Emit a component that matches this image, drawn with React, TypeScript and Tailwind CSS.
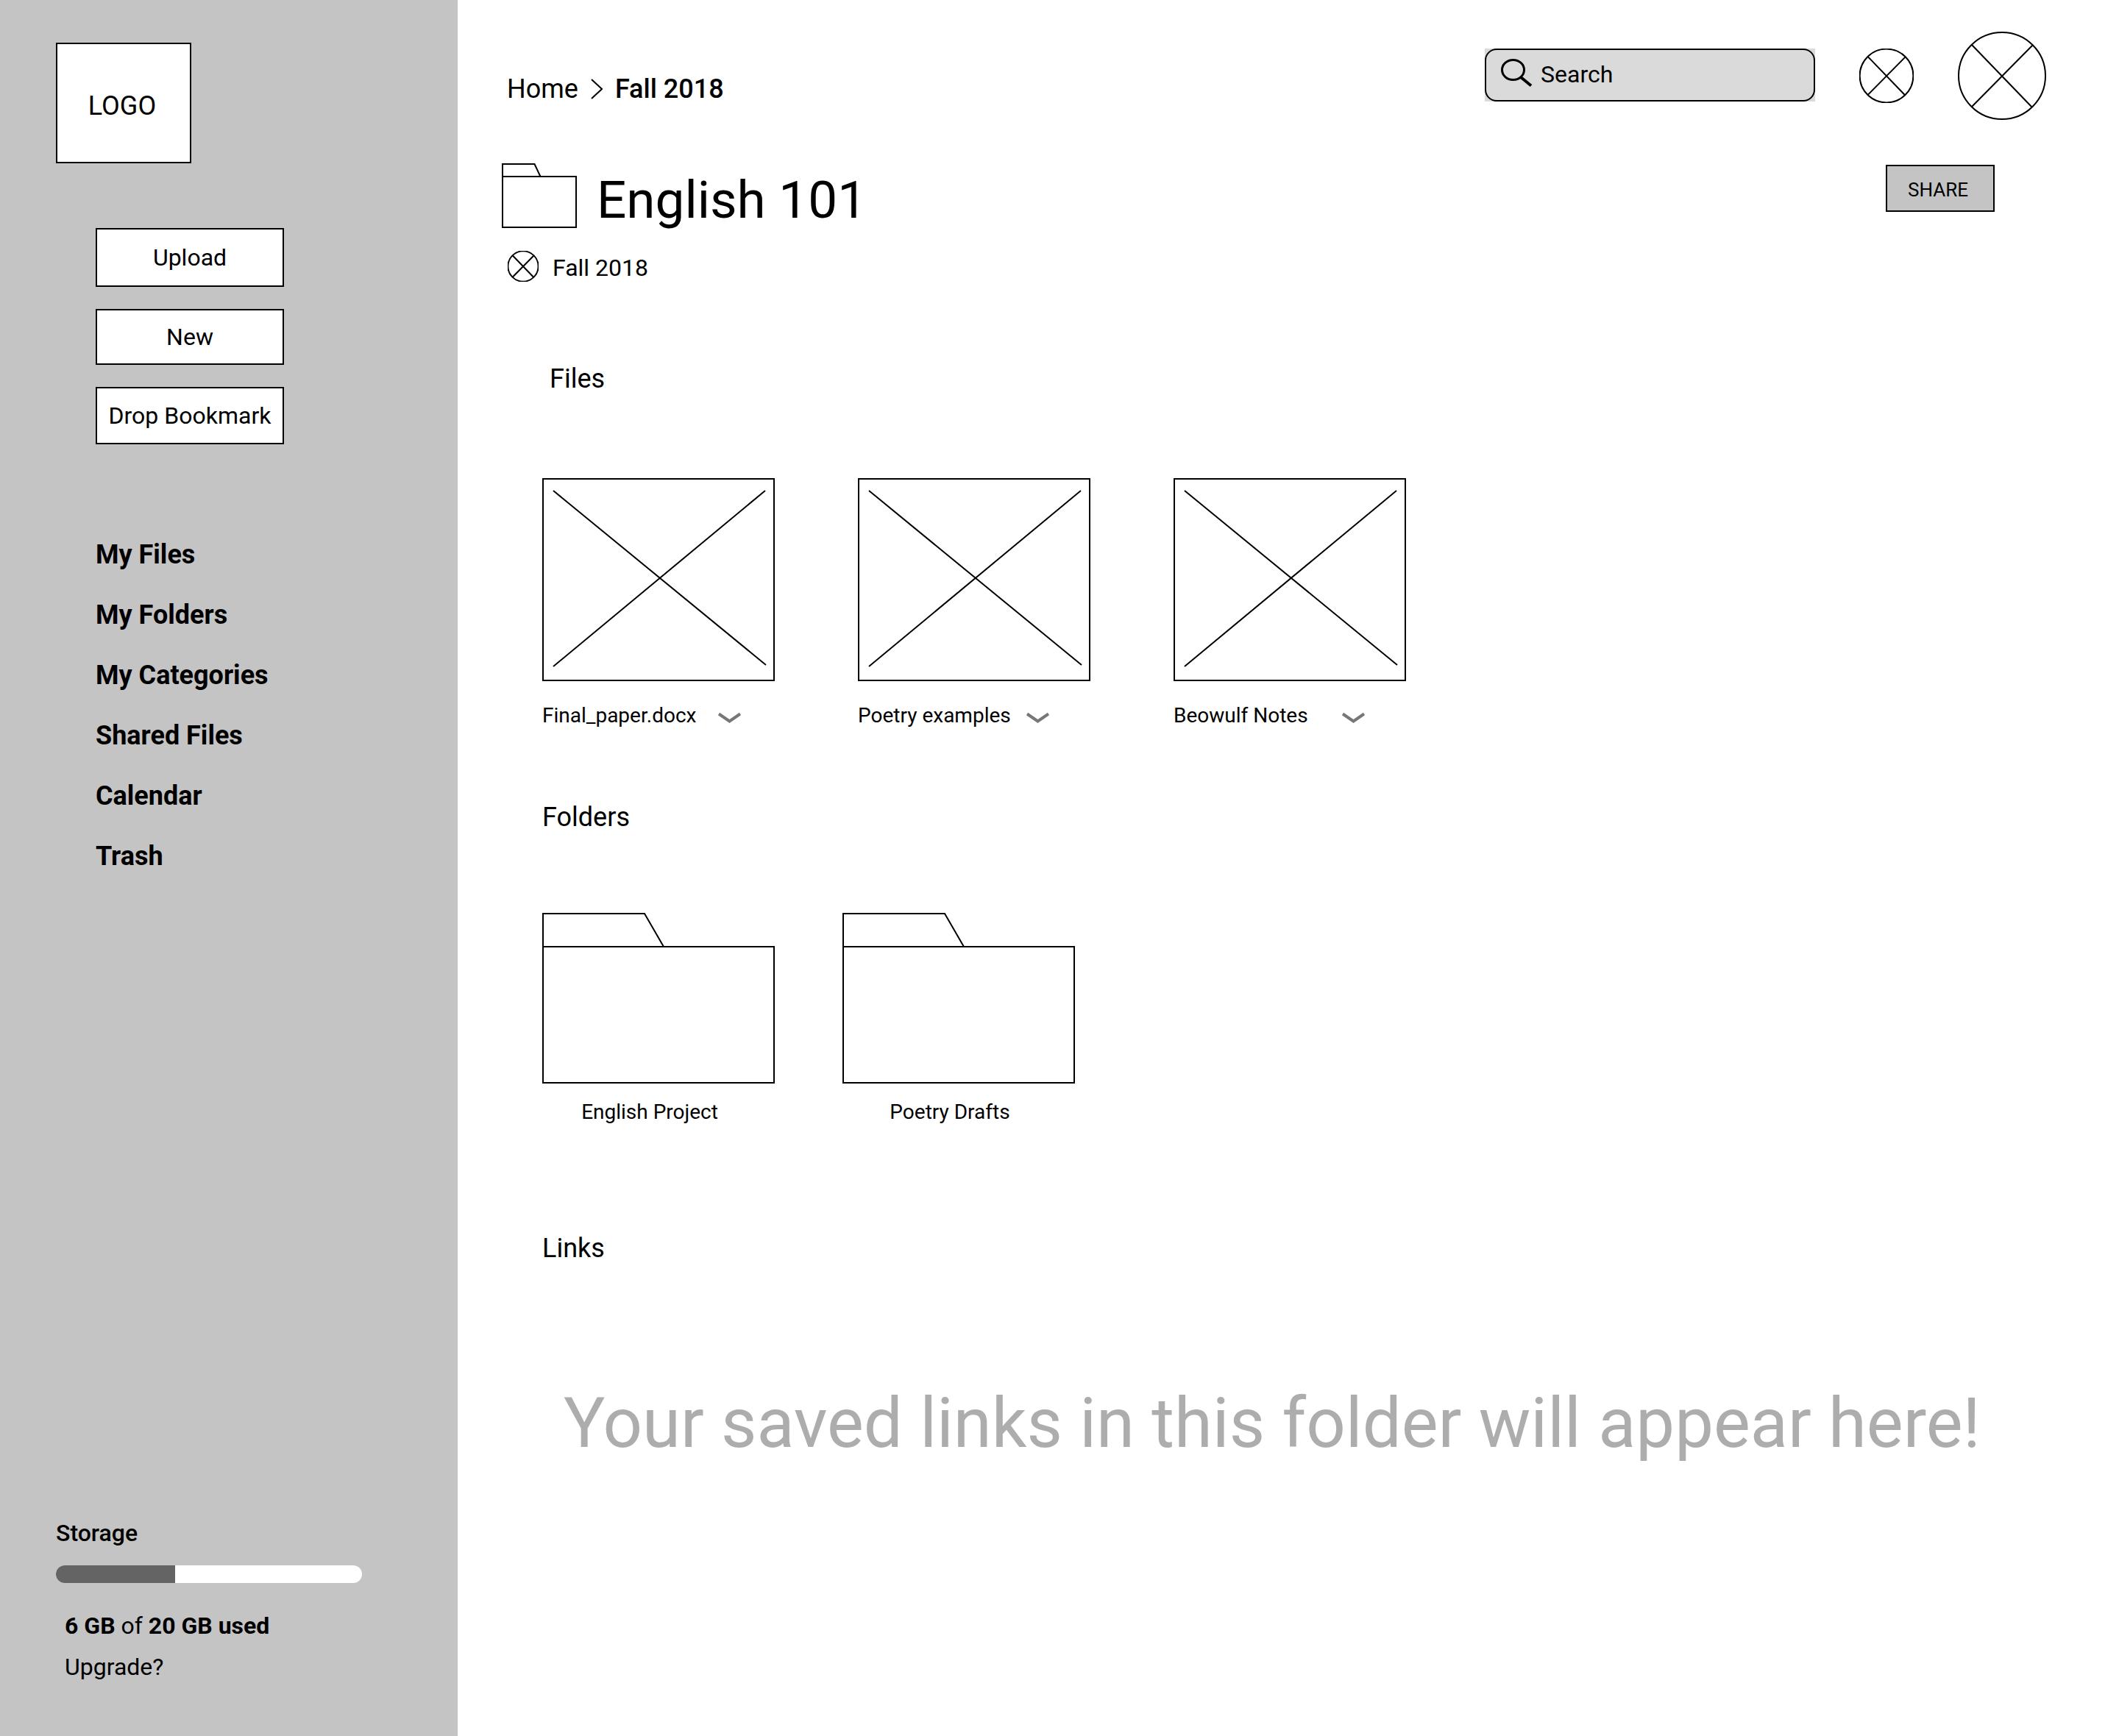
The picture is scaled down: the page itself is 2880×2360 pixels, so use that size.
import React from "react";

const menu = ["My Files", "My Folders", "My Categories", "Shared Files", "Calendar", "Trash"];
const actions = [
  { label: "Upload", height: "h-[80px]" },
  { label: "New", height: "h-[76px]" },
  { label: "Drop Bookmark", height: "h-[78px]" },
];
const files = [
  { name: "Final_paper.docx", nameWidth: "w-[238px]" },
  { name: "Poetry examples", nameWidth: "w-[228px]" },
  { name: "Beowulf Notes", nameWidth: "w-[228px]" },
];
const folders = ["English Project", "Poetry Drafts"];
const storage = { used: 6, total: 20, barPercent: 39 };

function CrossedCircle({ className }: { className: string }) {
  return (
    <svg viewBox="0 0 120 120" className={className} fill="none" stroke="black" strokeWidth="2" aria-hidden="true">
      <circle cx="60" cy="60" r="59" vectorEffect="non-scaling-stroke" />
      <path d="M19 18 L101 103 M102 18 L19 102" vectorEffect="non-scaling-stroke" />
    </svg>
  );
}

function SmallFolder() {
  return (
    <svg viewBox="0 0 102 88" className="h-[88px] w-[102px] shrink-0" fill="none" stroke="black" strokeWidth="2" aria-hidden="true">
      <path d="M1 18 V1 H44.5 L52.5 18" />
      <rect x="1" y="18" width="100" height="69" />
    </svg>
  );
}

function LargeFolder() {
  return (
    <svg viewBox="0 0 316 232" className="h-[232px] w-[316px]" fill="none" stroke="black" strokeWidth="2" aria-hidden="true">
      <path d="M1 46 V1 H139 L165 46" />
      <rect x="1" y="46" width="314" height="185" />
    </svg>
  );
}

function FileThumb() {
  return (
    <svg viewBox="0 0 316 276" className="h-[276px] w-[316px]" fill="none" stroke="black" strokeWidth="2" aria-hidden="true">
      <rect x="1" y="1" width="314" height="274" />
      <path d="M15 17 L304 254 M303 17 L15 256" />
    </svg>
  );
}

function SearchIcon() {
  return (
    <svg viewBox="0 0 44 42" className="mb-1 h-[42px] w-[44px] shrink-0" fill="none" stroke="black" aria-hidden="true">
      <ellipse cx="16.5" cy="16" rx="15" ry="13.5" strokeWidth="3" />
      <path d="M27 26 L41 37.5" strokeWidth="4" />
    </svg>
  );
}

function Sidebar() {
  return (
    <aside className="flex w-[622px] shrink-0 flex-col bg-[#c4c4c4] pt-[58px] pb-[74px] pl-[76px]">
      <div className="flex h-[164px] w-[184px] items-center justify-center border-2 border-black bg-white pt-2 pr-1 text-[36px] leading-[40px]">
        LOGO
      </div>

      <div className="mt-[88px] ml-[54px] flex w-[256px] flex-col gap-[30px]">
        {actions.map((action) => (
          <button
            key={action.label}
            type="button"
            className={`${action.height} border-2 border-black bg-white text-[32px] leading-[40px] whitespace-nowrap`}
          >
            {action.label}
          </button>
        ))}
      </div>

      <nav aria-label="Library" className="mt-[130px] ml-[54px]">
        <ul className="flex flex-col gap-[42px]">
          {menu.map((label) => (
            <li key={label} className="text-[36px] leading-[40px] font-bold">
              <a href="#">{label}</a>
            </li>
          ))}
        </ul>
      </nav>

      <section aria-label="Storage" className="mt-auto pt-16 text-[32px] leading-[40px]">
        <h2 className="font-medium">Storage</h2>
        <div
          role="progressbar"
          aria-label="Storage used"
          aria-valuenow={storage.used}
          aria-valuemin={0}
          aria-valuemax={storage.total}
          className="mt-6 h-6 w-[416px] overflow-hidden rounded-full bg-white"
        >
          <div className="h-full bg-[#646464]" style={{ width: `${storage.barPercent}%` }} />
        </div>
        <div className="mt-[38px] flex flex-col items-start gap-4 pl-3">
          <p>
            <b className="font-bold">{storage.used} GB</b> of <b className="font-bold">{storage.total} GB used</b>
          </p>
          <a href="#">Upgrade?</a>
        </div>
      </section>
    </aside>
  );
}

function Header() {
  return (
    <header className="flex items-start justify-between">
      <nav aria-label="Breadcrumb" className="ml-[7px] flex items-center pt-[58px] text-[36px] leading-[40px]">
        <a href="#">Home</a>
        <svg viewBox="0 0 16 28" className="mx-[17px] h-7 w-4" fill="none" stroke="black" strokeWidth="2" aria-hidden="true">
          <path d="M1 1 L15 14 L1 27" />
        </svg>
        <span className="font-medium" aria-current="page">
          Fall 2018
        </span>
      </nav>
      <div className="flex items-center gap-[60px]">
        <div className="mb-0.5 bg-[#dadada]">
          <label className="flex h-[72px] w-[449px] items-center rounded-[16px] border-2 border-black pr-4 pl-5">
            <SearchIcon />
            <input
              type="text"
              aria-label="Search"
              placeholder="Search"
              className="mb-0.5 ml-2.5 w-full min-w-0 bg-transparent text-[32px] leading-[40px] outline-none placeholder:text-black placeholder:opacity-100"
            />
          </label>
        </div>
        <button type="button" aria-label="Notifications">
          <CrossedCircle className="h-[74px] w-[74px]" />
        </button>
        <button type="button" aria-label="Account">
          <CrossedCircle className="h-[120px] w-[120px]" />
        </button>
      </div>
    </header>
  );
}

export default function App() {
  return (
    <div className="flex min-h-screen bg-white font-['Roboto',sans-serif] text-black">
      <Sidebar />
      <main className="min-w-0 flex-1 pt-[43px] pr-[99px] pb-16 pl-[60px]">
        <Header />

        <div className="mt-[59px] flex items-start justify-between">
          <div className="flex items-end gap-[27px]">
            <SmallFolder />
            <h1 className="text-[71px] leading-[76px]">English 101</h1>
          </div>
          <button type="button" className="mt-0.5 mr-[70px] h-16 w-[148px] border-2 border-black bg-[#c4c4c4] pt-1 pr-1.5 text-[26px] leading-[32px]">
            SHARE
          </button>
        </div>

        <div className="mt-[31px] ml-[8px] flex items-start gap-[19px]">
          <CrossedCircle className="h-[42px] w-[42px]" />
          <p className="pt-[3px] text-[32px] leading-[40px]">Fall 2018</p>
        </div>

        <div className="pl-[55px]">
          <section className="mt-[111px]">
            <h2 className="ml-[10px] text-[36px] leading-[40px]">Files</h2>
            <ul className="mt-[115px] flex flex-wrap gap-[113px]">
              {files.map((file) => (
                <li key={file.name} className="w-[316px]">
                  <FileThumb />
                  <div className="mt-[31px] flex items-center text-[28px] leading-[32px]">
                    <span className={file.nameWidth}>{file.name}</span>
                    <button type="button" aria-label={`Options for ${file.name}`} className="pt-1.5">
                      <svg viewBox="0 0 32 16" className="h-4 w-8" fill="none" stroke="#777" strokeWidth="4" aria-hidden="true">
                        <path d="M2 2.5 L16.5 12.5 L31 2.5" />
                      </svg>
                    </button>
                  </div>
                </li>
              ))}
            </ul>
          </section>

          <section className="mt-[102px]">
            <h2 className="text-[36px] leading-[40px]">Folders</h2>
            <ul className="mt-[110px] flex flex-wrap gap-[92px]">
              {folders.map((name) => (
                <li key={name} className="w-[316px]">
                  <a href="#">
                    <LargeFolder />
                    <span className="mt-[23px] block pr-6 text-center text-[28px] leading-[32px]">{name}</span>
                  </a>
                </li>
              ))}
            </ul>
          </section>

          <section className="mt-[149px]">
            <h2 className="text-[36px] leading-[40px]">Links</h2>
            <p className="mt-[162px] ml-[29px] text-[94px] leading-[112px] text-[#adadad]">
              Your saved links in this folder will appear here!
            </p>
          </section>
        </div>
      </main>
    </div>
  );
}
